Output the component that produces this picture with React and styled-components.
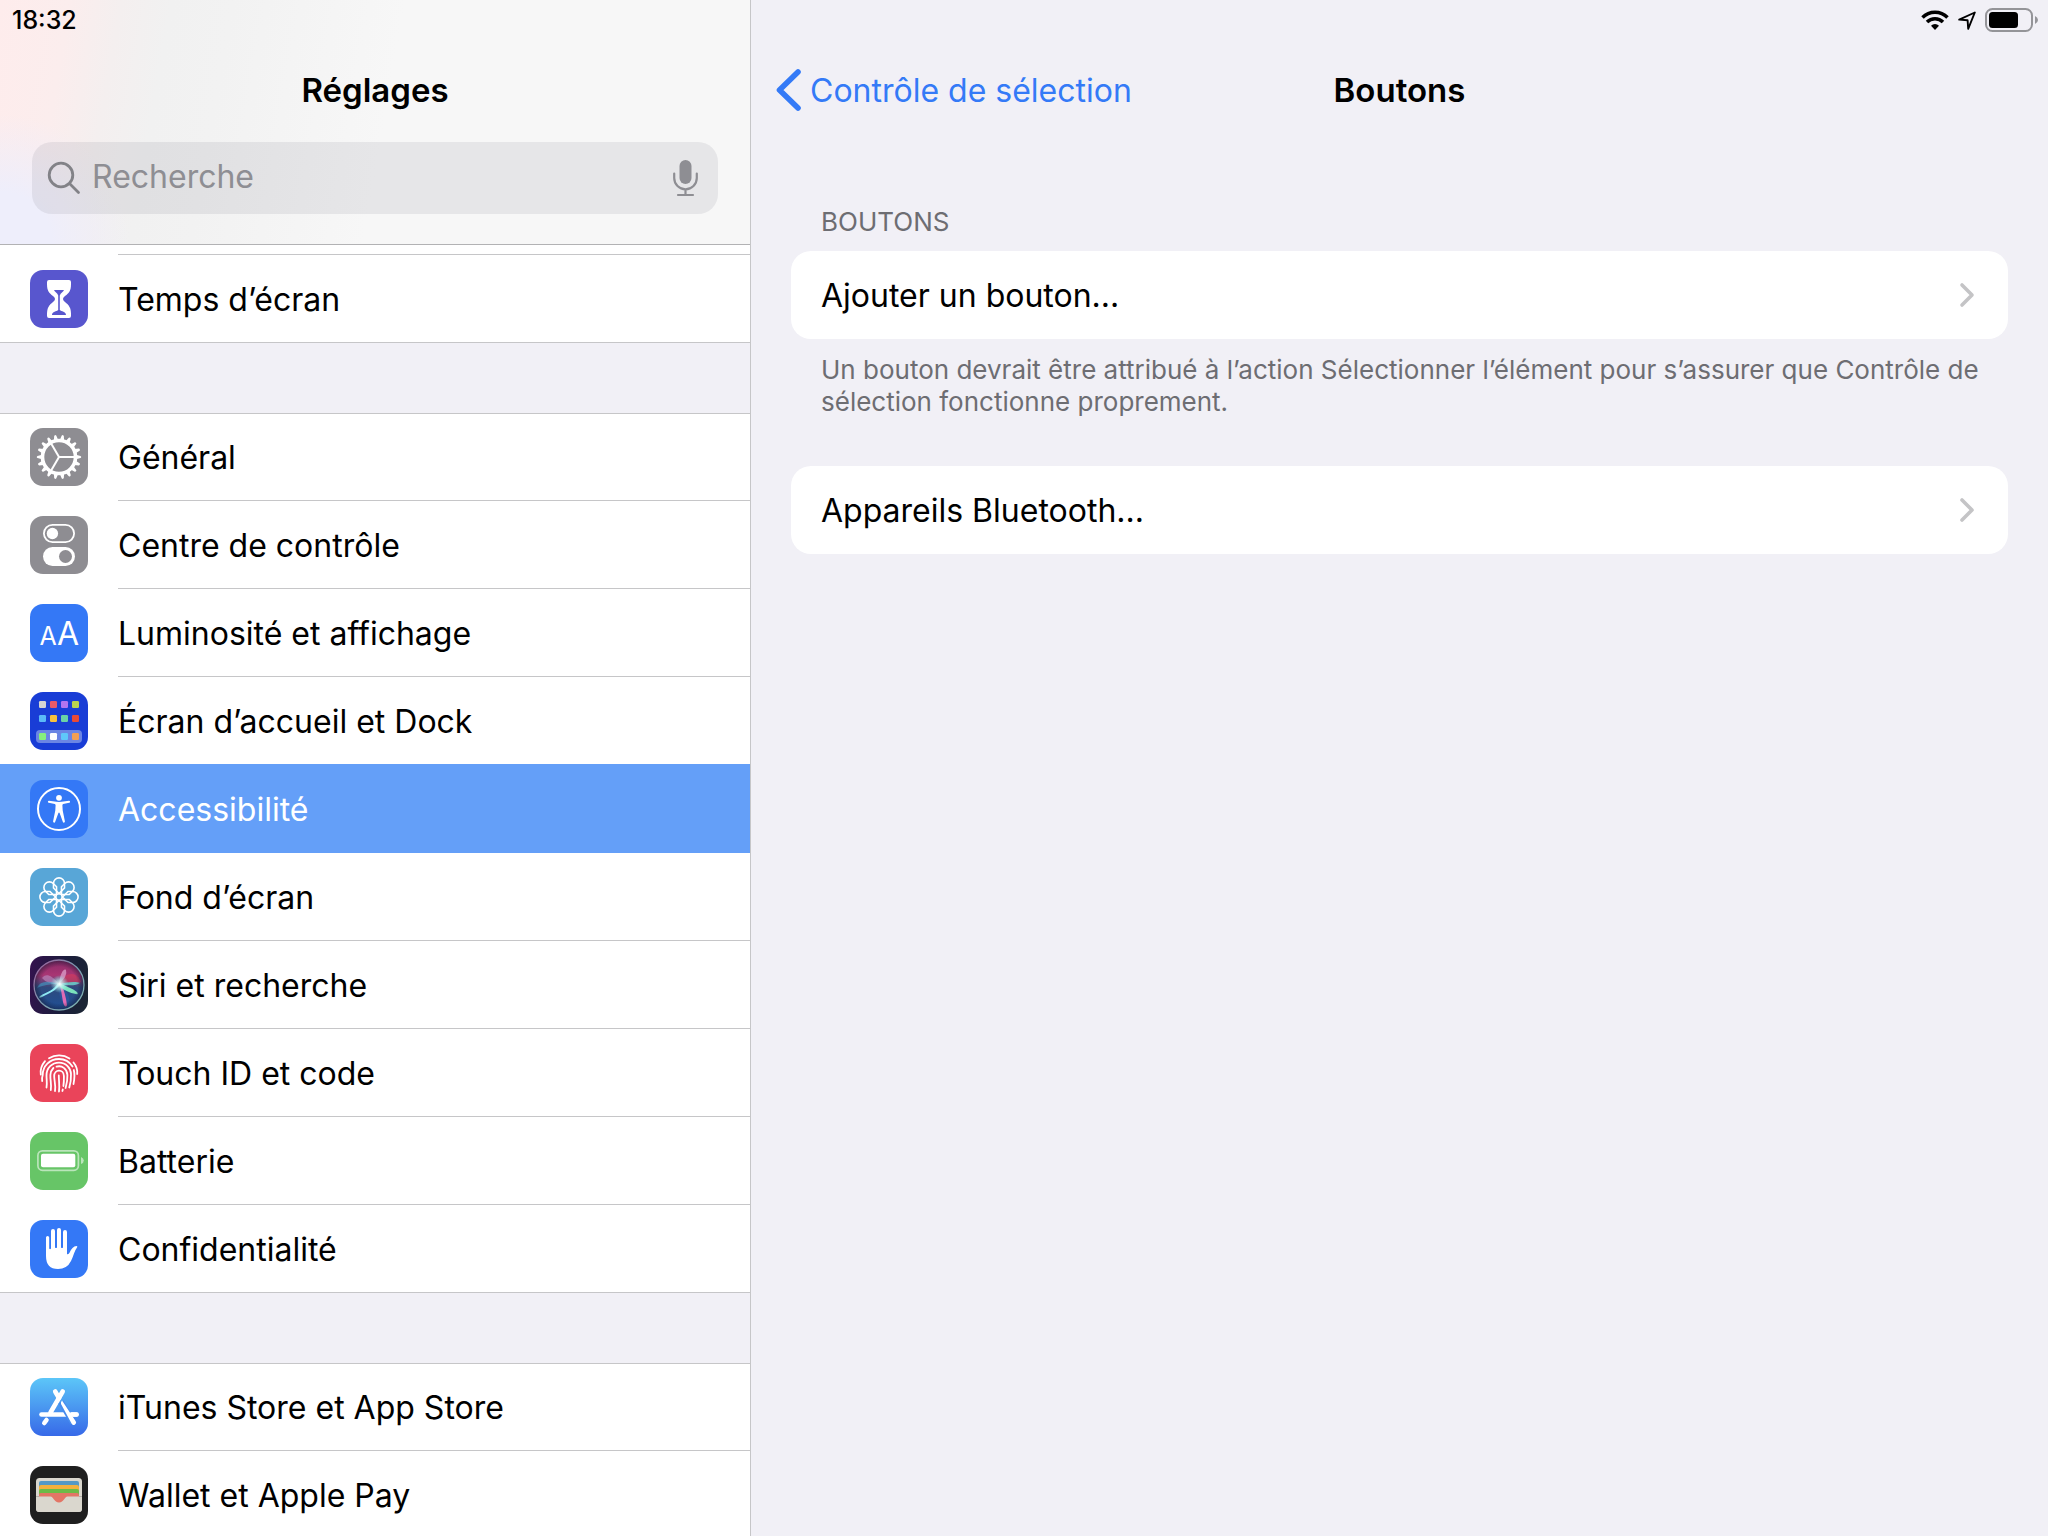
import React, { useState } from 'react'
import styled, { createGlobalStyle } from 'styled-components'

const GlobalStyle = createGlobalStyle`
  * {
    box-sizing: border-box;
  }
  body {
    margin: 0;
    background: #f1f0f6;
    color: #000;
    font-family: Inter, "Liberation Sans", sans-serif;
    font-size: 32px;
  }
`

const Page = styled.div`
  display: grid;
  grid-template-columns: 751fr 1297fr;
  height: 100vh;
  overflow: hidden;
`

const Sidebar = styled.aside`
  display: flex;
  flex-direction: column;
  min-width: 0;
  min-height: 0;
  border-right: 1px solid #c6c6c8;
`

const SidebarHeader = styled.header`
  flex: none;
  padding-bottom: 30px;
  border-bottom: 1px solid #b2b2b4;
  background:
    radial-gradient(ellipse 130px 130px at 0 100%, #eeeefb 40%, rgba(238, 238, 251, 0) 100%),
    linear-gradient(100deg, #feecec 0, #fbeded 70px, #f4efef 120px, #f1f1f1 170px, #f2f2f2 230px, #f7f7f7 400px);
`

const StatusBar = styled.div`
  display: flex;
  align-items: center;
  justify-content: ${({ $end }) => ($end ? 'flex-end' : 'flex-start')};
  gap: 9px;
  height: 40px;
  padding: 0 10px 0 12px;
  font-size: 25px;
  font-weight: 500;
`

const TitleBar = styled.div`
  display: grid;
  grid-template-columns: 1fr auto 1fr;
  align-items: center;
  height: 100px;
  padding: 0 24px;
`

const Title = styled.h1`
  grid-column: 2;
  margin: 0;
  font-size: 33px;
  font-weight: 600;
`

const SearchBox = styled.label`
  display: flex;
  align-items: center;
  gap: 11px;
  height: 72px;
  margin: 2px 32px 0;
  padding: 0 20px 0 15px;
  border-radius: 20px;
  background: rgba(118, 118, 128, 0.13);
`

const SearchInput = styled.input`
  flex: 1;
  min-width: 0;
  padding: 0 0 4px;
  border: 0;
  outline: 0;
  background: none;
  font: inherit;
  color: #000;

  &::placeholder {
    color: #8e8e93;
    opacity: 1;
  }
`

const MicButton = styled.button`
  display: flex;
  padding: 0;
  border: 0;
  background: none;
`

const Nav = styled.nav`
  flex: 1;
  min-height: 0;
  overflow: hidden;
`

// end of the row that is scrolled under the header
const RowTail = styled.div`
  height: 10px;
  background: linear-gradient(#c6c6c8, #c6c6c8) 118px 100% / 100% 1px no-repeat #fff;
`

const Group = styled.ul`
  margin: 0 0 70px;
  padding: 0;
  list-style: none;
`

const Item = styled.li`
  background: #fff;
  box-shadow: ${({ $topLine }) => ($topLine ? 'inset 0 1px #c6c6c8' : 'none')};
`

const Row = styled.a`
  display: flex;
  align-items: center;
  gap: 30px;
  height: 88px;
  padding: 0 30px;
  color: ${({ $active }) => ($active ? '#fff' : '#000')};
  text-decoration: none;
  white-space: nowrap;
  background: ${({ $active, $last }) =>
    $active
      ? '#649ff8'
      : `linear-gradient(#c6c6c8, #c6c6c8) ${$last ? '0' : '118px'} 100% / 100% 1px no-repeat`};
  box-shadow: ${({ $active }) => ($active ? '0 -1px #649ff8' : 'none')};
`

const Tile = styled.svg`
  flex: none;
  width: 58px;
  height: 58px;
  border-radius: 13px;
  background: ${({ $bg }) => $bg};
`

const Main = styled.main`
  min-width: 0;
`

const BackLink = styled.a`
  display: flex;
  align-items: center;
  gap: 8px;
  justify-self: start;
  color: #347af7;
  text-decoration: none;
  white-space: nowrap;
`

const Content = styled.div`
  padding: 61px 40px 0;
`

const SectionTitle = styled.h2`
  margin: 0;
  padding: 5px 30px 13px;
  font-size: 26px;
  font-weight: 400;
  line-height: 32px;
  color: #6d6d72;
`

const Card = styled.button`
  display: flex;
  align-items: center;
  justify-content: space-between;
  width: 100%;
  height: 88px;
  padding: 0 33px 0 30px;
  border: 0;
  border-radius: 20px;
  background: #fff;
  font: inherit;
  color: #000;
  text-align: left;
`

const Note = styled.p`
  margin: 0 0 48px;
  padding: 15px 20px 0 30px;
  font-size: 26px;
  line-height: 32px;
  color: #6d6d72;
`

const HourglassIcon = () => (
  <Tile viewBox="0 0 58 58" $bg="#5856ce" aria-hidden="true">
    <path
      fill="#fff"
      d="M19 10h20q2 0 2 2v2c0 7-2 9-6 12q-2 1.500-2 3t2 3c4 3 6 6 6 12v2q0 2-2 2H19q-2 0-2-2v-2c0-6 2-9 6-12q2-1.500 2-3t-2-3c-4-3-6-5-6-12v-2q0-2 2-2z"
    />
    <path
      fill="#5856ce"
      d="M24 20h10c-.5 2-3.500 3-4.200 5.500V40c1.500 1.500 6.200 1.500 6.200 5H22c0-3.500 4.700-3.500 6.200-5V25.500C27.500 23 24.500 22 24 20z"
    />
  </Tile>
)

const teeth = Array.from({ length: 18 }, (_, i) => i * 20)

const GearIcon = () => (
  <Tile viewBox="0 0 58 58" $bg="#8e8d92" aria-hidden="true">
    <g transform="translate(29 29)" fill="#fff">
      {teeth.map((a) => (
        <path key={a} transform={`rotate(${a})`} d="M17-2.200L21.500-1.100q.7.300.7 1.100t-.7 1.100L17 2.200z" />
      ))}
      <circle r="16.500" fill="none" stroke="#fff" strokeWidth="3.600" />
      {[0, 120, 240].map((a) => (
        <path key={a} transform={`rotate(${a})`} d="M0 0H16" stroke="#fff" strokeWidth="2" />
      ))}
    </g>
  </Tile>
)

const TogglesIcon = () => (
  <Tile viewBox="0 0 58 58" $bg="#8e8d92" aria-hidden="true">
    <rect x="13.900" y="8.900" width="30.200" height="17.200" rx="8.600" fill="none" stroke="#fff" strokeWidth="1.800" />
    <circle cx="22.400" cy="17.500" r="5.700" fill="#fff" />
    <rect x="13" y="31" width="32" height="19" rx="9.500" fill="#fff" />
    <circle cx="35.500" cy="40.500" r="6.500" fill="#8e8d92" />
  </Tile>
)

const DisplayIcon = () => (
  <Tile viewBox="0 0 58 58" $bg="#3478f6" aria-hidden="true">
    <g fill="#fff" fontFamily="Inter, sans-serif" textAnchor="middle">
      <text x="18" y="41" fontSize="25">A</text>
      <text x="38" y="41" fontSize="32">A</text>
    </g>
  </Tile>
)

const appColors = [
  ['#d5d5d3', '#ea5a68', '#b274f0', '#b9d24f'],
  ['#5bbaf8', '#f8c23c', '#6bd3a6', '#ea4a36'],
  ['#86ef7c', '#ffffff', '#5fc8fa', '#f3a052'],
]

const HomeIcon = () => (
  <Tile viewBox="0 0 58 58" $bg="#193dd6" aria-hidden="true">
    <rect x="6" y="38" width="46" height="13" rx="4" fill="#6b85e4" />
    {appColors.map((row, r) =>
      row.map((c, i) => (
        <rect key={c} x={9 + i * 11} y={[9, 23, 41][r]} width="7" height="7" rx="1.200" fill={c} />
      ))
    )}
  </Tile>
)

const AccessibilityIcon = () => (
  <Tile viewBox="0 0 58 58" $bg="#3478f6" aria-hidden="true">
    <circle cx="29" cy="29" r="21" fill="none" stroke="#fff" strokeWidth="2" />
    <circle cx="29" cy="17.800" r="2.900" fill="#fff" />
    <path
      fill="#fff"
      d="M19 20.800l7.500 1q2.500.2 5 0l7.500-1q1.100 0 1.100.9t-.9 1.100l-6 1.200q-.8.200-.8 1.200l.3 5.300 2.200 10.700q.1 1.200-.8 1.400t-1.300-.8L29.600 33q-.6-1.200-1.200 0l-3.200 8.800q-.4 1-1.300.8t-.8-1.400l2.200-10.700.3-5.300q0-1-.8-1.200l-6-1.200q-.9-.2-.9-1.100t1.100-.9z"
    />
  </Tile>
)

const WallpaperIcon = () => (
  <Tile viewBox="0 0 58 58" $bg="#58a6d7" aria-hidden="true">
    <g transform="translate(29 29)" fill="none" stroke="#fff" strokeWidth="1.600">
      <circle r="3.200" />
      {[0, 45, 90, 135, 180, 225, 270, 315].map((a) => (
        <path key={a} transform={`rotate(${a})`} d="M0-3.500L-5.500-9V-13.600A5.500 5.500 0 0 1 5.500-13.600V-9z" />
      ))}
    </g>
  </Tile>
)

const SiriIcon = () => (
  <Tile viewBox="0 0 58 58" $bg="linear-gradient(100deg, #35124f, #1b1d3c 55%, #1b2733)" aria-hidden="true">
    <defs>
      <linearGradient id="siriOrb" x1="0" y1="0" x2="0" y2="1">
        <stop offset="0" stopColor="#8a2a68" />
        <stop offset=".3" stopColor="#a93674" />
        <stop offset=".55" stopColor="#2e4a7d" />
        <stop offset="1" stopColor="#1e4f96" />
      </linearGradient>
      <linearGradient id="siriRing" x1="0" y1="0" x2="1" y2="1">
        <stop offset="0" stopColor="#a05a98" />
        <stop offset=".5" stopColor="#7b9bb0" />
        <stop offset="1" stopColor="#7fb8b4" />
      </linearGradient>
      <radialGradient id="siriGlow">
        <stop offset="0" stopColor="#fff" />
        <stop offset=".4" stopColor="#c8f5f5" stopOpacity=".7" />
        <stop offset="1" stopColor="#8ee" stopOpacity="0" />
      </radialGradient>
      <radialGradient id="siriShade" cx=".5" cy=".5" r=".5">
        <stop offset=".75" stopColor="#14162f" stopOpacity="0" />
        <stop offset="1" stopColor="#14162f" stopOpacity=".5" />
      </radialGradient>
    </defs>
    <circle cx="29" cy="29" r="24.500" fill="url(#siriOrb)" />
    <path d="M29 28C36 14 48 16 51 26q-10 5-22 2z" fill="#d33a5c" opacity=".65" />
    <path d="M29 28C20 17 15 18 12 22q6 7 17 6z" fill="#b983b8" opacity=".7" />
    <path d="M29 28C30 17 34 12 36 14q2 6-7 14z" fill="#e0a8d0" opacity=".7" />
    <path d="M29 28Q15 28 7 32q4-10 22-4z" fill="#3f9fc6" opacity=".6" />
    <path d="M30 28q14 14 7 21-10-4-7-21z" fill="#2c57a3" opacity=".7" />
    <path d="M29 28c8-2 17-3 21-1q-6 4-21 1z" fill="#62d2cf" opacity=".85" />
    <path d="M28 27c-4 7-11 9-18 13-2 2 0 2 2 1 8-4 13-6 18-12z" fill="#8fe9f4" />
    <path d="M29 27c3 8 3 17 5 22q2 3 3 0c-1-8-3-15-6-22z" fill="#e06bb4" />
    <path d="M29 27c6 3 13 5 18 9q2 3-1 2c-6-1-13-4-18-9z" fill="#7be3bd" />
    <circle cx="29.500" cy="28" r="9" fill="url(#siriGlow)" />
    <circle cx="29" cy="29" r="24.500" fill="url(#siriShade)" />
    <circle cx="29" cy="29" r="25" fill="none" stroke="url(#siriRing)" strokeWidth="1.300" />
  </Tile>
)

const TouchIdIcon = () => (
  <Tile viewBox="0 0 58 58" $bg="#ea445a" aria-hidden="true">
    <g fill="none" stroke="#fff" strokeWidth="1.800" strokeLinecap="round">
      <path d="M19 14.200a19 19 0 0 1 20.500.3" />
      <path d="M15 17.200c-4.500 5.300-4.800 9.500-4.200 13.500M43.500 18.500c3 3.500 4 7.500 3.700 11.500" />
      <path d="M12.200 37q-.5-3 .5-6c0-9 7-16 16.300-16 7 0 11 3.500 13.500 7.500M43.800 26c1.200 4.500.7 9-.3 14" />
      <path d="M16.500 43.500c.8-4 0-8 0-12C16.500 24 22 18.600 29 18.600S40.800 24 41 30c.2 5-.4 9-1.700 13.500" />
      <path d="M20.800 46c1-5-.7-10-.4-15 .2-3 1.300-5.300 3-7M26.500 22.700c5.500-1.700 10.500 2 10.900 8.300.2 5-.6 9-1.800 13" />
      <path d="M25 47c1-6-.8-10-.8-15 0-7 9.500-7.300 9.700 0 .1 4 0 7-.5 10M32.800 45.500l-.4 1.500" />
      <path d="M29 47.500c.8-6-.2-10-.2-16" />
    </g>
  </Tile>
)

const BatteryTileIcon = () => (
  <Tile viewBox="0 0 58 58" $bg="#67c567" aria-hidden="true">
    <rect x="7.900" y="18.900" width="40.500" height="19.400" rx="4.500" fill="none" stroke="#fff" strokeOpacity=".55" strokeWidth="1.700" />
    <rect x="11" y="21.800" width="34.300" height="13.500" rx="2" fill="#fff" />
    <path d="M51 25q2.800 1 2.800 3.500T51 32z" fill="#fff" fillOpacity=".55" />
  </Tile>
)

const HandIcon = () => (
  <Tile viewBox="0 0 58 58" $bg="#3478f6" aria-hidden="true">
    <path
      fill="#fff"
      d="M16 17.500a1.600 1.600 0 0 1 3.200 0V28.500q.8 1.500 1.800 0V11a2 2 0 0 1 4 0v16.500q1 1 2 0V10a2 2 0 0 1 4 0v17.500q1 1 2 0V12a2 2 0 0 1 4 0v22q1.500.8 2.500-1.200c1.800-4 4-6.500 7-6.800q1.500.2.500 1.500c-2.500 3-3.500 8.500-6 13.500Q37 49 28 49 16 49 16 36z"
    />
  </Tile>
)

const AppStoreIcon = () => (
  <Tile viewBox="0 0 58 58" $bg="linear-gradient(#5cc6f8, #4a98f0 50%, #3769e8)" aria-hidden="true">
    <g fill="none" stroke="#fff" strokeWidth="4.600" strokeLinecap="round">
      <path d="M25.200 13.500L29 20" />
      <path d="M32.700 13.500L20.500 34.500" />
      <path d="M16.500 42l-2.200 3" />
      <path d="M11.500 36.500H46.500" />
    </g>
    <path d="M31 24L43 45" stroke="#468bee" strokeWidth="6" />
    <path d="M32 22.500L45.700 43.200a2.300 2.300 0 0 1-4 2.600L31 26q-.5-2 1-3.500z" fill="#fff" />
    <path d="M42 36.500H46.500" stroke="#fff" strokeWidth="4.600" strokeLinecap="round" />
  </Tile>
)

const WalletIcon = () => (
  <Tile viewBox="0 0 58 58" $bg="#1f1f1f" aria-hidden="true">
    <rect x="6" y="12" width="46" height="34" rx="3.500" fill="#dad7ce" />
    <path d="M9 31V17q0-2 2-2h36q2 0 2 2v14z" fill="#5599c6" />
    <path d="M9 31V21q0-2 2-2h36q2 0 2 2v10z" fill="#f5b13d" />
    <path d="M9 31v-6q0-2 2-2h36q2 0 2 2v6z" fill="#6cbb48" />
    <path d="M9 38v-9q0-2 2-2h36q2 0 2 2v9z" fill="#e37566" />
    <path
      fill="#dad7ce"
      d="M6 30.500h14.500c3 0 3.500 6 8.500 6s5.500-6 8.500-6H52v12q0 3.500-3.500 3.500h-39Q6 46 6 42.500z"
    />
    <path d="M6 30.500h3M49 30.500h3" stroke="#b3b0a8" strokeWidth="1" />
  </Tile>
)

const Chevron = () => (
  <svg width="16" height="26" viewBox="0 0 16 26" aria-hidden="true">
    <path d="M3 3l10 10L3 23" fill="none" stroke="#c4c4c6" strokeWidth="3.600" strokeLinecap="round" strokeLinejoin="round" />
  </svg>
)

const WifiIcon = () => (
  <svg width="28" height="20" viewBox="0 0 28 20" aria-label="Wi-Fi" role="img">
    <g fill="none" stroke="#000" strokeWidth="3.500">
      <path d="M1.500 7.500a17.600 17.600 0 0 1 25 0" />
      <path d="M6 12a11.300 11.300 0 0 1 16 0" />
    </g>
    <path d="M14 20l-4-4.300a5.600 5.600 0 0 1 8 0z" />
  </svg>
)

const LocationIcon = () => (
  <svg width="18" height="19" viewBox="0 0 18 19" aria-label="Localisation" role="img">
    <path d="M1.200 8.600L16.800 1.500 10.200 17.800 9.600 9.300z" fill="none" stroke="#000" strokeWidth="1.900" strokeLinejoin="round" />
  </svg>
)

const BatteryIcon = () => (
  <svg width="53" height="24" viewBox="0 0 53 24" aria-label="Batterie" role="img">
    <rect x="1" y="1" width="46" height="22" rx="6.500" fill="none" stroke="#949498" strokeWidth="2" />
    <rect x="4" y="4" width="29" height="16" rx="3.500" />
    <path d="M50 8q3 1.500 3 4t-3 4z" fill="#949498" />
  </svg>
)

const groups = [
  [{ id: 'screen-time', label: 'Temps d’écran', Icon: HourglassIcon }],
  [
    { id: 'general', label: 'Général', Icon: GearIcon },
    { id: 'control-center', label: 'Centre de contrôle', Icon: TogglesIcon },
    { id: 'display', label: 'Luminosité et affichage', Icon: DisplayIcon },
    { id: 'home', label: 'Écran d’accueil et Dock', Icon: HomeIcon },
    { id: 'accessibility', label: 'Accessibilité', Icon: AccessibilityIcon },
    { id: 'wallpaper', label: 'Fond d’écran', Icon: WallpaperIcon },
    { id: 'siri', label: 'Siri et recherche', Icon: SiriIcon },
    { id: 'touch-id', label: 'Touch ID et code', Icon: TouchIdIcon },
    { id: 'battery', label: 'Batterie', Icon: BatteryTileIcon },
    { id: 'privacy', label: 'Confidentialité', Icon: HandIcon },
  ],
  [
    { id: 'store', label: 'iTunes Store et App Store', Icon: AppStoreIcon },
    { id: 'wallet', label: 'Wallet et Apple Pay', Icon: WalletIcon },
  ],
]

const App = () => {
  const [active, setActive] = useState('accessibility')
  const [query, setQuery] = useState('')

  return (
    <>
      <GlobalStyle />
      <Page>
        <Sidebar>
          <SidebarHeader>
            <StatusBar>18:32</StatusBar>
            <TitleBar>
              <Title>Réglages</Title>
            </TitleBar>
            <SearchBox>
              <svg width="34" height="34" viewBox="0 0 34 34" aria-hidden="true">
                <g fill="none" stroke="#828287" strokeWidth="2.800" strokeLinecap="round">
                  <circle cx="14" cy="14" r="11.800" />
                  <path d="M23 23l8.500 8.500" />
                </g>
              </svg>
              <SearchInput
                type="text"
                aria-label="Recherche"
                placeholder="Recherche"
                value={query}
                onChange={(e) => setQuery(e.target.value)}
              />
              <MicButton type="button" aria-label="Dicter">
                <svg width="25" height="37" viewBox="0 0 25 37" aria-hidden="true">
                  <rect x="6.500" y="0" width="12" height="24" rx="6" fill="#8e8e93" />
                  <path
                    d="M1.200 13.500V18a11.300 11.300 0 0 0 22.600 0v-4.500M12.500 29.500V35M5 35h15"
                    fill="none"
                    stroke="#8e8e93"
                    strokeWidth="2.200"
                    strokeLinecap="round"
                  />
                </svg>
              </MicButton>
            </SearchBox>
          </SidebarHeader>
          <Nav aria-label="Réglages">
            <RowTail />
            {groups.map((items, g) => (
              <Group key={items[0].id}>
                {items.map(({ id, label, Icon }, i) => (
                  <Item key={id} $topLine={g > 0 && i === 0}>
                    <Row
                      href={`#${id}`}
                      $active={id === active}
                      $last={i === items.length - 1}
                      aria-current={id === active ? 'page' : undefined}
                      onClick={() => setActive(id)}
                    >
                      <Icon />
                      {label}
                    </Row>
                  </Item>
                ))}
              </Group>
            ))}
          </Nav>
        </Sidebar>

        <Main>
          <StatusBar $end>
            <WifiIcon />
            <LocationIcon />
            <BatteryIcon />
          </StatusBar>
          <TitleBar>
            <BackLink href="#switch-control">
              <svg width="27" height="44" viewBox="0 0 27 44" aria-hidden="true">
                <path d="M23 4L4.500 22 23 40" fill="none" stroke="#347af7" strokeWidth="5.600" strokeLinecap="round" strokeLinejoin="round" />
              </svg>
              Contrôle de sélection
            </BackLink>
            <Title>Boutons</Title>
          </TitleBar>
          <Content>
            <SectionTitle>BOUTONS</SectionTitle>
            <Card type="button">
              Ajouter un bouton...
              <Chevron />
            </Card>
            <Note>
              Un bouton devrait être attribué à l’action Sélectionner l’élément pour s’assurer que Contrôle de
              sélection fonctionne proprement.
            </Note>
            <Card type="button">
              Appareils Bluetooth...
              <Chevron />
            </Card>
          </Content>
        </Main>
      </Page>
    </>
  )
}

export default App
